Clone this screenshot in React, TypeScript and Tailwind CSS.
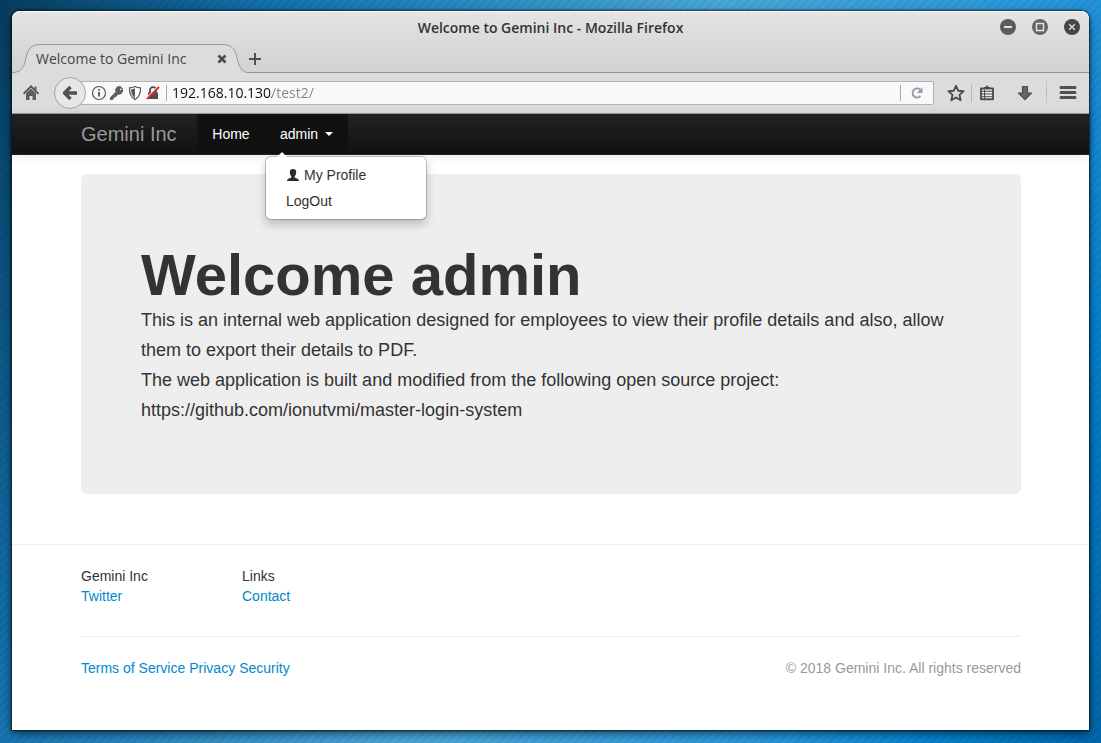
import type { ReactNode } from "react";

function Brand() {
  return <a href="#" className="w-[116px] py-[10px] text-xl leading-5 text-[#999]">Gemini Inc</a>;
}

function WindowButton({ label, color, children }: { label: string; color: string; children: ReactNode }) {
  return (
    <button aria-label={label} className="size-4">
      <svg viewBox="0 0 16 16" className="size-4">
        <circle cx="8" cy="8" r="8" fill={color} />
        {children}
      </svg>
    </button>
  );
}

function TitleBar() {
  return (
    <div className="relative flex h-[31px] items-center justify-center">
      <h1 className="text-sm font-semibold text-[#333]">Welcome to Gemini Inc - Mozilla Firefox</h1>
      <div className="absolute right-[9px] top-[7px] flex gap-4">
        <WindowButton label="Minimize" color="#5c5c5c">
          <path d="M4 8h8" stroke="#e4e4e4" strokeWidth="2" />
        </WindowButton>
        <WindowButton label="Maximize" color="#666">
          <path d="M4.5 4.5h7v7h-7z" fill="none" stroke="#e4e4e4" strokeWidth="1.4" />
        </WindowButton>
        <WindowButton label="Close" color="#464646">
          <path d="M5.2 5.2l5.6 5.6M10.8 5.2l-5.6 5.6" stroke="#e4e4e4" strokeWidth="1.3" />
        </WindowButton>
      </div>
    </div>
  );
}

function TabStrip() {
  return (
    <div className="flex h-[30px] border-b border-[#949494]">
      <div className="relative flex h-[30px] w-[236px] items-center pt-[2px] pl-6 pr-[18px]">
        <svg viewBox="0 0 236 30" className="absolute inset-0 h-[30px] w-[236px]">
          <path d="M0 29.5C10 29.5 12 24 14 15C16 5 20 1.500 29 1.500H210C219 1.500 223 5 225 15C227 24 230 29.500 236 29.500V30H0Z" fill="#dcdcdc" />
          <path d="M0 29.500C10 29.500 12 24 14 15C16 5 20 1.500 29 1.500H210C219 1.500 223 5 225 15C227 24 230 29.500 236 29.500" fill="none" stroke="#949a9e" />
        </svg>
        <span className="relative grow whitespace-nowrap text-sm text-[#444]">Welcome to Gemini Inc</span>
        <button aria-label="Close tab" className="relative size-4">
          <svg viewBox="0 0 16 16" className="size-4">
            <path d="M4.500 4.500l7 7M11.500 4.500l-7 7" stroke="#4b4b4b" strokeWidth="2.600" />
          </svg>
        </button>
      </div>
      <button aria-label="New tab" className="flex h-[30px] items-center pt-[2px]">
        <svg viewBox="0 0 14 14" className="size-[14px]">
          <path d="M7 1v12M1 7h12" stroke="#505050" strokeWidth="2" />
        </svg>
      </button>
    </div>
  );
}

function IdentityIcons() {
  return (
    <div className="flex gap-[2px]">
      <svg viewBox="0 0 16 16" className="size-4">
        <circle cx="8" cy="8" r="6.500" fill="none" stroke="#555" strokeWidth="1.200" />
        <path d="M8 7v4.500M8 4v1.800" stroke="#555" strokeWidth="1.800" />
      </svg>
      <svg viewBox="0 0 16 16" className="size-4">
        <path fillRule="evenodd" d="M10.500 1A4.300 4.300 0 0 0 6.500 7L1 12.400V15h3v-1.500h1.500V12H7l1.800-2.300A4.300 4.300 0 1 0 10.500 1ZM11.800 3.600a.8 .8 0 1 1 0 1.600a.8 .8 0 0 1 0-1.600Z" fill="#5e5e5e" />
      </svg>
      <svg viewBox="0 0 16 16" className="size-4">
        <path d="M8 1.500C6 2.600 4 2.800 2.500 2.800C2.300 8 3.500 12 8 14.500C12.500 12 13.700 8 13.500 2.800C12 2.800 10 2.600 8 1.500Z" fill="#fff" stroke="#555" strokeWidth="1.200" />
        <path d="M8 3.200C6.500 4 5.300 4.200 4.100 4.300C4.200 8.200 5 11 8 12.900Z" fill="#555" />
      </svg>
      <svg viewBox="0 0 16 16" className="size-4">
        <path d="M5 8V5.200a3 3 0 0 1 6 0V8" fill="none" stroke="#4f4f4f" strokeWidth="1.800" />
        <path d="M3 7.500h10V14H3z" fill="#4f4f4f" />
        <path d="M1.500 13.500L13.500 1.500" stroke="#fff" strokeWidth="2" />
        <path d="M2 14L14 2" stroke="#e22a24" strokeWidth="2" />
      </svg>
    </div>
  );
}

function NavBar() {
  return (
    <div className="flex h-[41px] items-center border-b border-[#9c9c9c] bg-[#dcdcdc]">
      <button aria-label="Home page" className="ml-[10px] size-[18px]">
        <svg viewBox="0 0 18 18" className="size-[18px]">
          <path d="M1.500 9.800L9 2.300l7.500 7.500" fill="none" stroke="#505050" strokeWidth="1.700" />
          <path d="M12.500 2.500h2v4h-2zM4 9.300l5-4.800 5 4.800V16h-3.500v-4h-3v4H4z" fill="#5e5e5e" />
        </svg>
      </button>
      <button aria-label="Back" className="relative z-10 ml-[14px] flex size-8 items-center justify-center rounded-full border border-[#a4a4a4] bg-[#e6e6e6]">
        <svg viewBox="0 0 16 16" className="size-4">
          <path d="M8.500 2L2.500 8l6 6M3 8H15" fill="none" stroke="#505050" strokeWidth="3.400" strokeLinejoin="round" />
        </svg>
      </button>
      <form className="-ml-[6px] flex h-6 grow items-center rounded-r-[2px] border border-[#b2b2b2] bg-[#f9f9f9] pl-[10px]">
        <IdentityIcons />
        <span className="ml-[5px] h-4 w-px bg-[#aaa]" />
        <input
          aria-label="Address"
          defaultValue="192.168.10.130/test2/"
          className="ml-[5px] h-5 min-w-0 grow bg-[linear-gradient(90deg,#111_100px,#858585_100px)] bg-clip-text text-sm text-transparent outline-none"
        />
        <span className="h-4 w-px bg-[#aaa]" />
        <button type="button" aria-label="Reload" className="mx-2 size-4">
          <svg viewBox="0 0 16 16" className="size-4">
            <path d="M11 4.500A4.500 4.500 0 1 0 11.500 11" fill="none" stroke="#929eac" strokeWidth="2" />
            <path d="M13.500 2v6H7.800z" fill="#929eac" />
          </svg>
        </button>
      </form>
      <button aria-label="Bookmark this page" className="ml-[13px] size-[18px]">
        <svg viewBox="0 0 18 18" className="size-[18px]">
          <path d="M9 1.800l2.200 4.900 5.300.6-4 3.600 1.100 5.300L9 13.500l-4.600 2.700 1.100-5.300-4-3.600 5.300-.6z" fill="none" stroke="#4c4c4c" strokeWidth="1.900" strokeLinejoin="round" />
        </svg>
      </button>
      <span className="ml-[6px] h-[18px] w-px bg-[#b8b8b8]" />
      <button aria-label="Bookmarks list" className="ml-[6px] size-[18px]">
        <svg viewBox="0 0 18 18" className="size-[18px]">
          <path d="M6 4V3h1.500L9 1l1.500 2H12v1z" fill="#4c4c4c" />
          <path d="M3 4.500h12v10.800H3z" fill="#eee" stroke="#4c4c4c" strokeWidth="1.900" strokeLinejoin="round" />
          <path d="M4 7.300h10M4 10h10M4 12.700h10M6.500 6v9" stroke="#4c4c4c" strokeWidth="1" />
        </svg>
      </button>
      <button aria-label="Downloads" className="ml-5 size-[18px]">
        <svg viewBox="0 0 18 18" className="size-[18px]">
          <path d="M6.500 2.500h5V9h4L9 15.500 2.500 9h4z" fill="#666" stroke="#4c4c4c" strokeWidth="1.200" strokeLinejoin="round" />
        </svg>
      </button>
      <span className="ml-3 h-8 w-px bg-linear-to-b from-[#dcdcdc] via-[#b4b4b4] to-[#dcdcdc]" />
      <button aria-label="Open menu" className="ml-[12px] mr-3 size-[18px]">
        <svg viewBox="0 0 18 18" className="size-[18px]">
          <path d="M2 3.500h14M2 8.500h14M2 13.500h14" stroke="#505050" strokeWidth="3" strokeLinecap="round" />
        </svg>
      </button>
    </div>
  );
}

function UserMenu() {
  return (
    <div className="absolute left-0 top-[42px] z-20 w-[162px] rounded-md border border-black/20 bg-white bg-clip-padding py-[5px] shadow-[0_5px_10px_rgba(0,0,0,0.2)]">
      <svg viewBox="0 0 14 7" className="absolute -top-[6px] left-[9px] h-[7px] w-[14px]">
        <path d="M1 7l6-6 6 6z" fill="#fff" />
      </svg>
      <a href="#" className="flex items-center gap-1 px-5 py-[3px] text-[#333]">
        <svg viewBox="0 0 14 14" className="size-[14px]">
          <path d="M7 1C4.600 1 3.700 2.500 3.800 4.500C3.900 6.500 4.800 7.600 5.300 8.300V9.500C4.500 10.300 1 10.500 1 13H13C13 10.500 9.500 10.300 8.700 9.500V8.300C9.200 7.600 10.100 6.500 10.200 4.500C10.300 2.500 9.400 1 7 1Z" fill="#2b2b2b" />
        </svg>
        My Profile
      </a>
      <a href="#" className="block px-5 py-[3px] text-[#333]">LogOut</a>
    </div>
  );
}

function SiteNav() {
  return (
    <nav className="relative z-10 border-b border-[#252525] bg-linear-to-b from-[#222] to-[#111] pl-[69px] pr-[68px] shadow-[0_1px_10px_rgba(0,0,0,0.1)]">
      <div className="flex h-10">
        <Brand />
        <a href="#" className="w-[68px] bg-[#111] py-[10px] text-center text-white">Home</a>
        <div className="relative">
          <button className="flex h-10 w-[83px] items-center justify-between bg-[#111] px-[15px] text-white">
            admin
            <svg viewBox="0 0 8 4" className="h-1 w-2">
              <path d="M0 0h8L4 4z" fill="#fff" />
            </svg>
          </button>
          <UserMenu />
        </div>
      </div>
    </nav>
  );
}

function Footer() {
  return (
    <footer className="mt-[50px] border-t border-[#eee] pt-[21px] pl-[69px] pr-[68px]">
      <div className="grid grid-cols-[141px_141px] gap-5 text-[#333]">
        <div>
          <p>Gemini Inc</p>
          <a href="#" className="text-[#0088cc]">Twitter</a>
        </div>
        <div>
          <p>Links</p>
          <a href="#" className="text-[#0088cc]">Contact</a>
        </div>
      </div>
      <div className="mt-[30px] flex justify-between border-t border-[#eee] pt-[21px]">
        <p className="flex gap-1 text-[#0088cc]">
          <a href="#">Terms of Service</a>
          <a href="#">Privacy</a>
          <a href="#">Security</a>
        </p>
        <p className="text-[#999]">© 2018 Gemini Inc. All rights reserved</p>
      </div>
    </footer>
  );
}

export default function App() {
  return (
    <div className="flex min-h-screen flex-col bg-[repeating-linear-gradient(135deg,rgba(0,0,0,0.05)_0px,rgba(0,0,0,0.05)_3px,transparent_3px,transparent_6px),linear-gradient(112deg,#063d5f_0%,#1473b0_20%,#4aa8d8_51%,#2596dd_77%,#0482d0_88%,#0068ac_100%)] px-3 pt-[11px] pb-[13px]">
      <div className="flex grow flex-col rounded-t-lg bg-white shadow-[0_3px_10px_rgba(0,0,0,0.6),0_0_2px_1px_rgba(0,0,0,0.6)]">
        <header className="rounded-t-lg border-t border-white bg-linear-to-b from-[#e4e4e4] to-[#d4d4d4] to-[50px] font-['Open_Sans','Noto_Sans',sans-serif]">
          <TitleBar />
          <TabStrip />
          <NavBar />
        </header>
        <div className="font-['Liberation_Sans',Arial,sans-serif] text-sm leading-5">
          <SiteNav />
          <main className="mt-[19px] ml-[69px] mr-[68px] rounded-md bg-[#eee] px-[60px] pt-[71px] pb-[69px] text-[#333]">
            <h2 className="text-[58px] leading-[60px] font-bold">Welcome admin</h2>
            <p className="text-lg leading-[30px]">
              This is an internal web application designed for employees to view their profile details and also, allow them to export their details to PDF.
              <br />
              The web application is built and modified from the following open source project: https://github.com/ionutvmi/master-login-system
            </p>
          </main>
          <Footer />
        </div>
      </div>
    </div>
  );
}
